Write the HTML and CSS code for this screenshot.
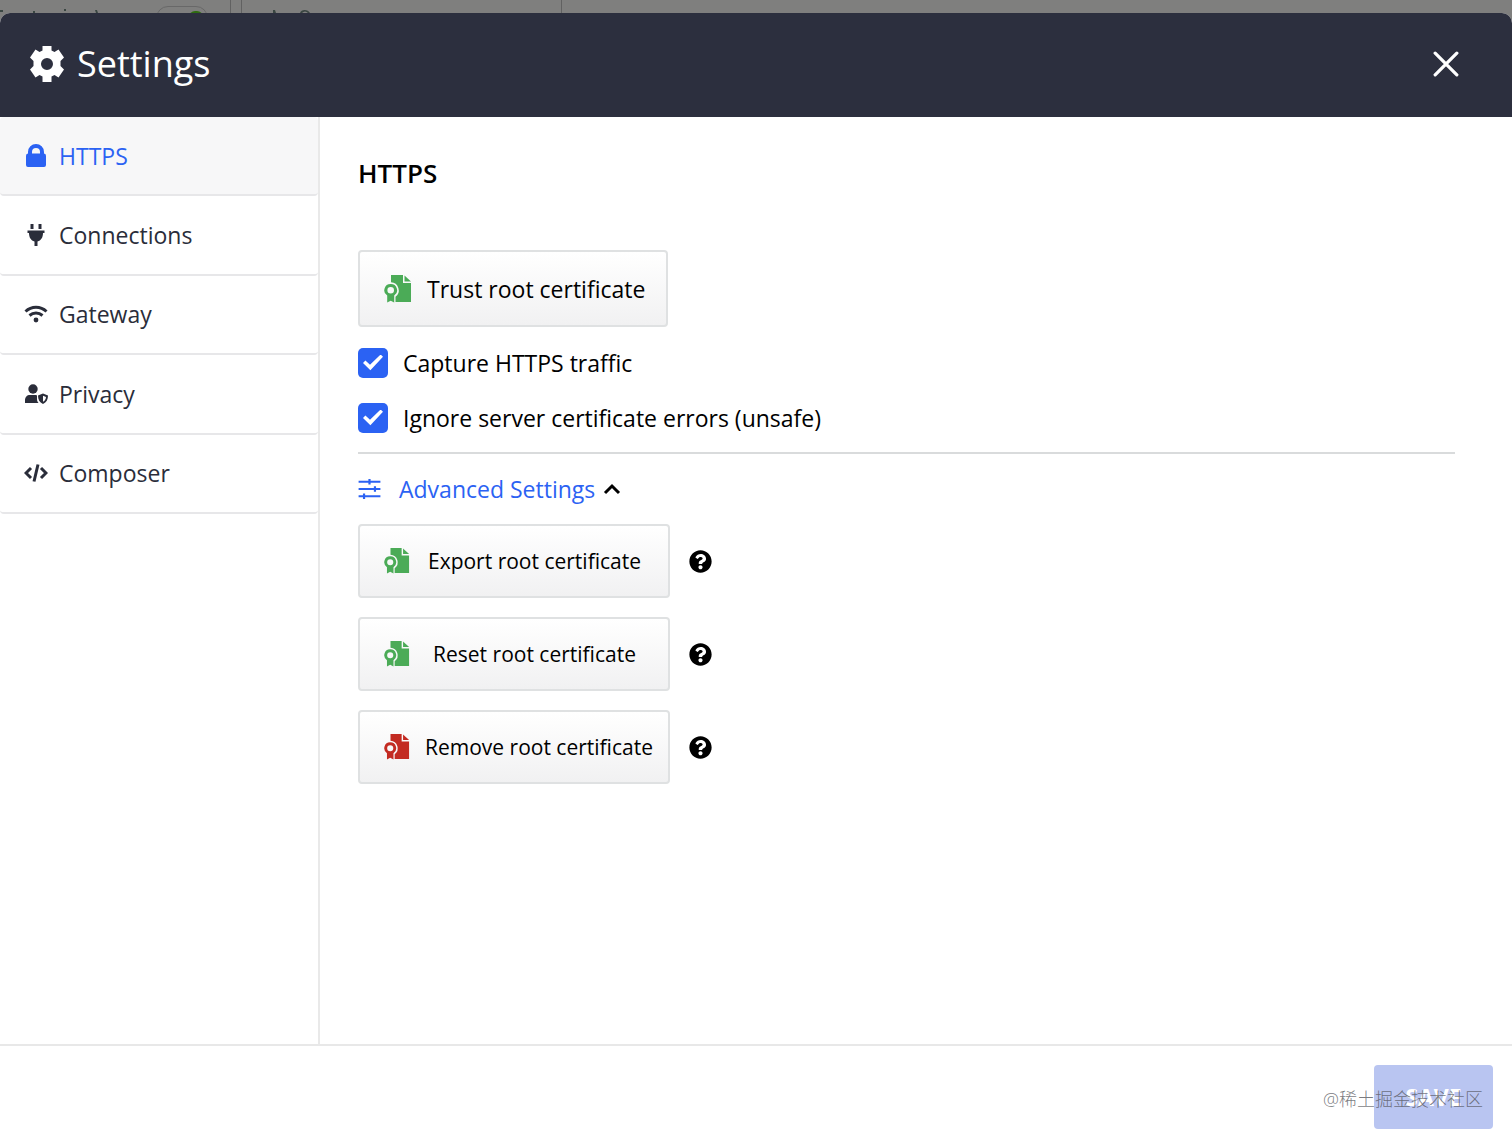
FILE: index.html
```html
<!DOCTYPE html>
<html lang="en">
<head>
<meta charset="utf-8">
<title>Settings</title>
<link rel="stylesheet" href="styles.css">
</head>
<body>
<svg class="defs" aria-hidden="true">
  <symbol id="cert" viewBox="0 0 28 28">
    <path d="M7 0h12v8h8v19H11.500v-5.300A8 8 0 0 0 7 7.300z"/>
    <path d="M20.500.5v6H27z"/>
    <path fill-rule="evenodd" d="M6.700 9a6.300 6.300 0 0 1 3.500 11.600V27.500l-3.500-1.800-3.500 1.800v-6.900A6.300 6.300 0 0 1 6.700 9zm0 3a3.300 3.300 0 1 0 0 6.600 3.300 3.300 0 0 0 0-6.600z"/>
  </symbol>
  <symbol id="help" viewBox="0 0 512 512">
    <path d="M504 256c0 136.997-111.043 248-248 248S8 392.997 8 256C8 119.083 119.043 8 256 8s248 111.083 248 248zM262.655 90c-54.497 0-89.255 22.957-116.549 63.758-3.536 5.286-2.353 12.415 2.715 16.258l34.699 26.310c5.205 3.947 12.621 3.008 16.665-2.122 17.864-22.658 30.113-35.797 57.303-35.797 20.429 0 45.698 13.148 45.698 32.958 0 14.976-12.363 22.667-32.534 33.976C247.128 238.528 216 254.941 216 296v4c0 6.627 5.373 12 12 12h56c6.627 0 12-5.373 12-12v-1.333c0-28.462 83.186-29.647 83.186-106.667 0-58.002-60.165-102-116.531-102zM256 338c-25.365 0-46 20.635-46 46 0 25.364 20.635 46 46 46s46-20.636 46-46c0-25.365-20.635-46-46-46z"/>
  </symbol>
</svg>

<div class="backdrop" aria-hidden="true">
  <div class="tool tool-capture">
    <svg class="specks" viewBox="0 0 100 13"><path d="M0 10h3v2H0zM33 11h2v2h-2zM64 9h2v2h-2zM95 10h2l1 3h-2z"/></svg>
    <i class="switch"></i>
  </div>
  <div class="tool tool-filter">
    <svg class="specks" viewBox="0 0 100 13"><path d="M31 10h2l1 3h-3zM58 13c1-4 8-4 10 0h-2c-2-2-4-2-6 0z"/></svg>
  </div>
</div>

<section class="modal" role="dialog" aria-labelledby="title">
  <header class="head">
    <svg class="gear" viewBox="0 0 36 36"><path fill-rule="evenodd" d="M13.500 0h9v4.500l3 1.500 4-2.500 5.500 8-3.500 3.500v5l3.500 3.500-5.500 8-4-2.500-3 1.500V36h-9v-5.500l-3-1.500-4 2.500-5.500-8 3.500-3.500v-5L1 11.500l5.500-8 4 2.500 3-1.500zM18 12a6 6 0 1 0 0 12 6 6 0 0 0 0-12z"/></svg>
    <h1 id="title">Settings</h1>
    <button class="close" type="button" aria-label="Close"><svg viewBox="0 0 24 24"><path d="M2 2l20 20M22 2L2 22"/></svg></button>
  </header>

  <div class="body">
    <nav class="side">
      <div class="menu">
        <a class="item active" href="#https"><svg viewBox="0 0 24 24"><path fill-rule="evenodd" d="M4 9.500V8a8 8 0 0 1 16 0v1.500A2.300 2.300 0 0 1 22 12v9a2 2 0 0 1-2 2H4a2 2 0 0 1-2-2v-9a2.300 2.300 0 0 1 2-2.500zM8 9.500h8V8a4 4 0 0 0-8 0z"/></svg>HTTPS</a>
        <a class="item" href="#connections"><svg viewBox="0 0 24 24"><path d="M6.500 1h3v5h-3zM14.500 1h3v5h-3zM3.500 7.500h17v2.500H19c0 4.500-2 7.500-5.500 8.500v4.500h-3v-4.500C7 17.500 5 14.500 5 10H3.500z"/></svg>Connections</a>
        <a class="item" href="#gateway"><svg viewBox="0 0 24 24"><path class="line" d="M1.500 9.500c6-5.600 15-5.600 21 0M5.500 13.500c3.800-3.300 9.200-3.300 13 0"/><circle cx="12" cy="18" r="2.400"/></svg>Gateway</a>
        <a class="item" href="#privacy"><svg viewBox="0 0 24 24"><circle cx="9" cy="7" r="4.700"/><path d="M1 21v-2.500C1 15 3 13 6 13h6.500l.5 1v3c0 1.700.6 3 1.600 4z"/><path fill-rule="evenodd" d="M19 11.500l5 2c0 4-1.500 7-5 8.500-3.500-1.500-5-4.500-5-8.500zm0 2.200v6c1.900-1.100 2.900-2.600 3-4.800z"/></svg>Privacy</a>
        <a class="item" href="#composer"><svg viewBox="0 0 24 24"><path class="line" d="M7 7l-5 5 5 5M17 7l5 5-5 5M14 3.500l-4 17"/></svg>Composer</a>
      </div>
    </nav>

    <main class="content">
      <h2>HTTPS</h2>
      <button class="btn trust" type="button"><svg><use href="#cert"/></svg><span>Trust root certificate</span></button>
      <label class="check"><input type="checkbox" checked>Capture HTTPS traffic</label>
      <label class="check"><input type="checkbox" checked>Ignore server certificate errors (unsafe)</label>
      <hr>
      <button class="advanced" type="button" aria-expanded="true">
        <svg class="sliders" viewBox="0 0 24 22"><path d="M0 3h24M0 11h24M0 19h24M12 0v6M18 8v6M6 16v6"/></svg>
        <span>Advanced Settings</span>
        <svg class="chevron" viewBox="0 0 18 12"><path d="M2 10l7-7 7 7"/></svg>
      </button>
      <div class="actions">
        <div class="row"><button class="btn" type="button"><svg><use href="#cert"/></svg><span>Export root certificate</span></button><button class="help" type="button" aria-label="Help"><svg><use href="#help"/></svg></button></div>
        <div class="row"><button class="btn" type="button"><svg><use href="#cert"/></svg><span>Reset root certificate</span></button><button class="help" type="button" aria-label="Help"><svg><use href="#help"/></svg></button></div>
        <div class="row"><button class="btn danger" type="button"><svg><use href="#cert"/></svg><span>Remove root certificate</span></button><button class="help" type="button" aria-label="Help"><svg><use href="#help"/></svg></button></div>
      </div>
    </main>
  </div>

  <footer class="foot">
    <button class="save" type="button" disabled>SAVE</button>
    <span class="credit">@稀土掘金技术社区</span>
  </footer>
</section>
</body>
</html>
```

FILE: styles.css
```css
* { box-sizing: border-box; }

body {
  margin: 0;
  min-height: 100vh;
  display: flex;
  flex-direction: column;
  background: #7f7f7e;
  color: #000;
  font: 23px/32px "Open Sans", "Noto Sans CJK SC", sans-serif;
}

button { font: inherit; color: inherit; cursor: pointer; }
svg { flex: none; }
.defs { position: absolute; width: 0; height: 0; }

/* Toolbar strip behind the dialog */
.backdrop {
  height: 13px;
  display: flex;
  gap: 10px;
  overflow: hidden;
}
.tool { height: 40px; border-right: 1px solid #616161; }
.tool-capture { width: 231px; display: flex; justify-content: space-between; padding-right: 22px; }
.specks { display: block; width: 100px; height: 13px; fill: #3a4642; }
.switch { width: 52px; height: 24px; margin-top: 6px; border: 1px solid #686868; border-radius: 12px; }
.switch::after { content: ""; display: block; width: 14px; height: 14px; margin: 4px 0 0 32px; border-radius: 6px; background: #2f6d10; }
.tool-filter { width: 321px; border-left: 1px solid #616161; }

.modal {
  flex: 1;
  display: flex;
  flex-direction: column;
  background: #fff;
  border-radius: 10px 10px 0 0;
  overflow: hidden;
}

.head {
  height: 104px;
  flex: none;
  display: flex;
  align-items: center;
  gap: 12px;
  padding: 0 53px 2px 29px;
  background: #2c2f3e;
  color: #fff;
}
.head h1 { flex: 1; margin: 0; font-size: 36px; line-height: 48px; font-weight: 400; }
.gear { width: 36px; height: 36px; fill: #fff; }
.close { display: flex; padding: 0; border: 0; background: none; }
.close svg { width: 26px; height: 26px; fill: none; stroke: #fff; stroke-width: 3; stroke-linecap: round; }

.body { flex: 1; display: flex; }

.side { width: 320px; flex: none; border-right: 2px solid #e9e9e9; }
.menu { display: grid; grid-auto-rows: 1fr; height: 397px; }
.item {
  display: flex;
  align-items: center;
  gap: 11px;
  padding-left: 24px;
  border-bottom: 2px solid #e7e7e9;
  border-radius: 4px;
  color: #2a2d3a;
  text-decoration: none;
}
.item svg { width: 24px; height: 24px; fill: currentColor; }
.item .line { fill: none; stroke: currentColor; stroke-width: 3; }
.item.active { background: #f7f7f8; color: #2b62f3; }

.content { flex: 1; padding: 40px 57px 0 38px; }
.content h2 { margin: 0 0 61px; font-size: 26px; line-height: 32px; font-weight: 600; }

.btn {
  display: flex;
  align-items: center;
  gap: 15px;
  width: 312px;
  height: 74px;
  padding: 0 24px;
  border: 2px solid #dfe1e2;
  border-radius: 4px;
  background: linear-gradient(#fff, #f1f1f2);
  font-size: 21px;
  white-space: nowrap;
}
.btn svg { width: 26px; height: 26px; fill: #4bab57; }
.btn span { flex: 1; text-align: center; }
.btn.danger svg { fill: #c32b22; }
.btn.trust { width: 310px; height: 77px; margin-bottom: 20px; font-size: 23px; }
.btn.trust svg { width: 28px; height: 28px; }

.check { display: flex; align-items: center; gap: 15px; height: 31px; margin-bottom: 24px; }
.check input {
  appearance: none;
  width: 30px;
  height: 30px;
  margin: 0;
  display: grid;
  place-items: center;
  border-radius: 5px;
  background: #2b62f3;
}
.check input::before { content: ""; width: 20px; height: 16px; background: #fff; clip-path: polygon(0 53%, 12% 38%, 35% 64%, 88% 0, 100% 14%, 37% 98%); }

hr { height: 2px; margin: -5px 0 19px; border: 0; background: #d9dbdc; }

.advanced { display: flex; align-items: center; padding: 0; border: 0; background: none; color: #2b62f3; }
.sliders { width: 23px; height: 20px; margin-right: 18px; fill: none; stroke: currentColor; stroke-width: 2.400; }
.chevron { width: 18px; height: 12px; margin-left: 8px; fill: none; stroke: #000; stroke-width: 3; }

.actions { display: grid; gap: 19px; margin-top: 19px; }
.row { display: flex; align-items: center; gap: 19px; }
.help { display: flex; padding: 0; border: 0; background: none; }
.help svg { width: 23px; height: 23px; }

.foot {
  position: relative;
  height: 95px;
  flex: none;
  display: flex;
  justify-content: flex-end;
  align-items: flex-start;
  padding: 19px 19px 0 0;
  border-top: 2px solid #e8e8e8;
}
.save { width: 119px; height: 64px; padding: 0; border: 0; border-radius: 4px; background: #b9c5f1; color: #fff; font-weight: 700; font-size: 23px; }
.credit { position: absolute; right: 29px; bottom: 24px; font-size: 18px; line-height: 32px; font-weight: 300; color: rgba(80, 80, 86, .75); }
```
